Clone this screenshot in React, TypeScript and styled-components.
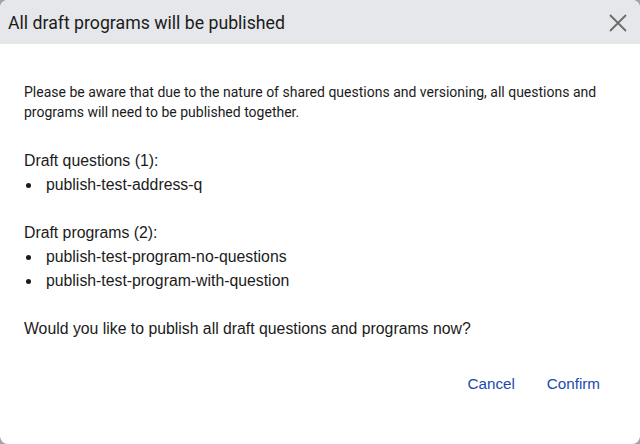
import React from "react";
import styled, { createGlobalStyle } from "styled-components";

const Global = createGlobalStyle`
  html, body { margin: 0; padding: 0; background: #a3a4a8; }
  body { font-family: "Liberation Sans", Arial, sans-serif; }
`;

const Dialog = styled.div`
  width: 640px;
  height: 444px;
  background: #ffffff;
  border-radius: 8px;
  overflow: hidden;
  display: flex;
  flex-direction: column;
  color: #1b1b1b;
`;

const Header = styled.div`
  height: 44px;
  background: #e5e7eb;
  display: flex;
  align-items: center;
  justify-content: space-between;
  padding: 1px 10px 0 8px;
  box-sizing: border-box;
`;

const Title = styled.h2`
  margin: 0;
  font-family: Roboto, sans-serif;
  font-weight: 400;
  font-size: 17.7px;
  color: #1b1b1b;
`;

const CloseButton = styled.button`
  border: none;
  background: transparent;
  padding: 0;
  width: 24px;
  height: 24px;
  display: flex;
  align-items: center;
  justify-content: center;
  cursor: pointer;
`;

const Body = styled.div`
  padding: 38px 24px 0 24px;
  display: flex;
  flex-direction: column;
`;

const Intro = styled.p`
  margin: 0 0 27px 0;
  font-family: Roboto, sans-serif;
  font-size: 14px;
  line-height: 20px;
`;

const SectionTitle = styled.div`
  font-size: 15.8px;
  line-height: 24px;
`;

const List = styled.ul`
  margin: 0 0 24px 0;
  padding: 0;
  list-style: none;
`;

const Item = styled.li`
  position: relative;
  padding-left: 22px;
  font-size: 15.8px;
  line-height: 24px;
  &::before {
    content: "";
    position: absolute;
    left: 2px;
    top: 10px;
    width: 5px;
    height: 5px;
    border-radius: 50%;
    background: #1b1b1b;
  }
`;

const Question = styled.p`
  margin: 0;
  font-size: 15.8px;
  line-height: 24px;
`;

const Footer = styled.div`
  display: flex;
  justify-content: flex-end;
  gap: 32px;
  padding: 31px 40px 0 0;
`;

const LinkButton = styled.button`
  border: none;
  background: transparent;
  padding: 0;
  font-family: "Liberation Sans", Arial, sans-serif;
  font-size: 15.2px;
  line-height: 24px;
  color: #1a4ab0;
  cursor: pointer;
`;

export default function App() {
  return (
    <>
      <Global />
      <Dialog>
        <Header>
          <Title>All draft programs will be published</Title>
          <CloseButton aria-label="Close">
            <svg width="18" height="18" viewBox="0 0 18 18">
              <path d="M1 1 L17 17 M17 1 L1 17" stroke="#6b6b6b" strokeWidth="1.8" />
            </svg>
          </CloseButton>
        </Header>
        <Body>
          <Intro>
            Please be aware that due to the nature of shared questions and versioning, all questions and
            programs will need to be published together.
          </Intro>
          <SectionTitle>Draft questions (1):</SectionTitle>
          <List>
            <Item>publish-test-address-q</Item>
          </List>
          <SectionTitle>Draft programs (2):</SectionTitle>
          <List>
            <Item>publish-test-program-no-questions</Item>
            <Item>publish-test-program-with-question</Item>
          </List>
          <Question>Would you like to publish all draft questions and programs now?</Question>
        </Body>
        <Footer>
          <LinkButton>Cancel</LinkButton>
          <LinkButton>Confirm</LinkButton>
        </Footer>
      </Dialog>
    </>
  );
}
